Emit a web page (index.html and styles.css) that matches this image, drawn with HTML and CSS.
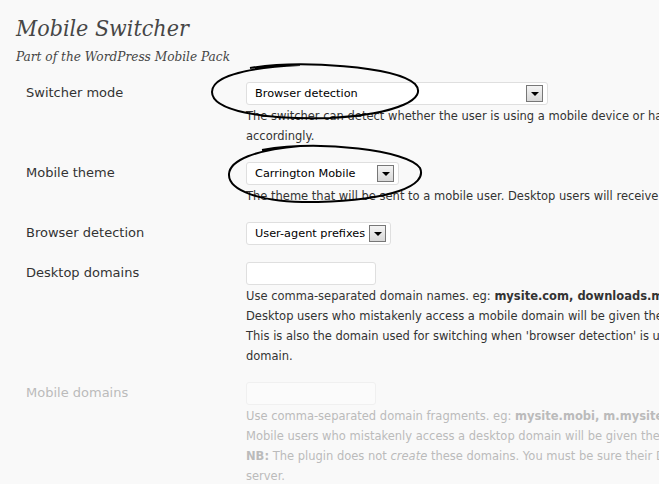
FILE: index.html
```html
<!DOCTYPE html>
<html>
<head>
<meta charset="utf-8">
<link rel="stylesheet" href="styles.css">
</head>
<body>
<div class="page">
  <h2 class="title">Mobile Switcher</h2>
  <p class="subtitle">Part of the WordPress Mobile Pack</p>

  <div class="form">
    <div class="row">
      <div class="label">Switcher mode</div>
      <div class="field">
        <div class="select w1"><span class="val">Browser detection</span><span class="arrow"></span></div>
        <div class="desc">
          <div class="line">The switcher can detect whether the user is using a mobile device or has chosen a domain, and switch themes</div>
          <div class="line">accordingly.</div>
        </div>
      </div>
    </div>

    <div class="row">
      <div class="label">Mobile theme</div>
      <div class="field">
        <div class="select w2"><span class="val">Carrington Mobile</span><span class="arrow"></span></div>
        <div class="desc">
          <div class="line">The theme that will be sent to a mobile user. Desktop users will receive the normal theme.</div>
        </div>
      </div>
    </div>

    <div class="row plain">
      <div class="label">Browser detection</div>
      <div class="field">
        <div class="select w3"><span class="val">User-agent prefixes</span><span class="arrow"></span></div>
      </div>
    </div>

    <div class="row">
      <div class="label">Desktop domains</div>
      <div class="field">
        <div class="input"></div>
        <div class="desc">
          <div class="line">Use comma-separated domain names. eg: <b>mysite.com, downloads.mysite.com</b></div>
          <div class="line">Desktop users who mistakenly access a mobile domain will be given the desktop theme.</div>
          <div class="line">This is also the domain used for switching when 'browser detection' is used and a user is on the desktop</div>
          <div class="line">domain.</div>
        </div>
      </div>
    </div>

    <div class="row disabled">
      <div class="label">Mobile domains</div>
      <div class="field">
        <div class="input"></div>
        <div class="desc">
          <div class="line">Use comma-separated domain fragments. eg: <b>mysite.mobi, m.mysite.com</b></div>
          <div class="line">Mobile users who mistakenly access a desktop domain will be given the mobile theme.</div>
          <div class="line"><b>NB:</b> The plugin does not <i>create</i> these domains. You must be sure their DNS points to your</div>
          <div class="line">server.</div>
        </div>
      </div>
    </div>
  </div>

  <svg class="marks" width="659" height="484" viewBox="0 0 659 484">
    <path d="M250 68 C300 60 395 66 415 84 C428 98 400 114 330 118 C260 120 212 110 212 92 C212 78 240 68 300 65" fill="none" stroke="#000" stroke-width="2"/>
    <path d="M262 150 C320 140 408 150 420 168 C428 186 390 200 318 202 C258 203 228 190 229 174 C230 160 255 150 300 146" fill="none" stroke="#000" stroke-width="2"/>
  </svg>
</div>
</body>
</html>
```
FILE: styles.css
```css
html, body {
  margin: 0;
  padding: 0;
  overflow: hidden;
  background: #f9f9f9;
}
.page {
  position: relative;
  width: 659px;
  height: 484px;
  padding: 0 0 0 16px;
  box-sizing: border-box;
  font-family: "DejaVu Sans", Verdana, sans-serif;
  color: #333;
}
.title {
  margin: 0;
  padding-top: 13px;
  font-family: "DejaVu Serif", Georgia, serif;
  font-stretch: condensed;
  font-style: italic;
  font-weight: normal;
  font-size: 23px;
  line-height: 30px;
  color: #464646;
}
.subtitle {
  margin: 5px 0 0;
  font-family: "DejaVu Serif", Georgia, serif;
  font-stretch: condensed;
  font-style: italic;
  font-size: 13.5px;
  line-height: 16px;
  color: #464646;
}
.form {
  margin-top: 18px;
  display: flex;
  flex-direction: column;
}
.row {
  display: grid;
  grid-template-columns: 220px 1000px;
  padding: 0 0 16px 10px;
}
.row.plain {
  padding-bottom: 17px;
}
.label {
  font-size: 13px;
  line-height: 22px;
}
.field {
  display: flex;
  flex-direction: column;
  align-items: flex-start;
}
.select {
  height: 23px;
  box-sizing: border-box;
  background: #fff;
  border: 1px solid #dfdfdf;
  border-radius: 3px;
  display: flex;
  align-items: center;
  justify-content: space-between;
  padding: 0 4px 0 8px;
  font-size: 11.3px;
  color: #000;
}
.w1 { width: 302px; }
.w2 { width: 153px; }
.w3 { width: 145px; }
.arrow {
  width: 17px;
  height: 17px;
  box-sizing: border-box;
  border: 1px solid #777;
  background: linear-gradient(#f4f4f4, #d8d8d8);
  position: relative;
  flex: none;
}
.arrow::after {
  content: "";
  position: absolute;
  left: 4px;
  top: 6px;
  border-left: 4px solid transparent;
  border-right: 4px solid transparent;
  border-top: 4px solid #000;
}
.w3 .arrow { margin-left: 3px; }
.input {
  width: 130px;
  height: 23px;
  box-sizing: border-box;
  background: #fff;
  border: 1px solid #dfdfdf;
  border-radius: 3px;
}
.desc {
  margin-top: 1px;
  font-size: 11.5px;
  line-height: 20px;
}
.line {
  white-space: nowrap;
}
.disabled {
  color: #bbb;
}
.disabled .input {
  background: #fbfbfb;
  border-color: #f0f0f0;
}
.marks {
  position: absolute;
  left: 0;
  top: 0;
  pointer-events: none;
}
```
